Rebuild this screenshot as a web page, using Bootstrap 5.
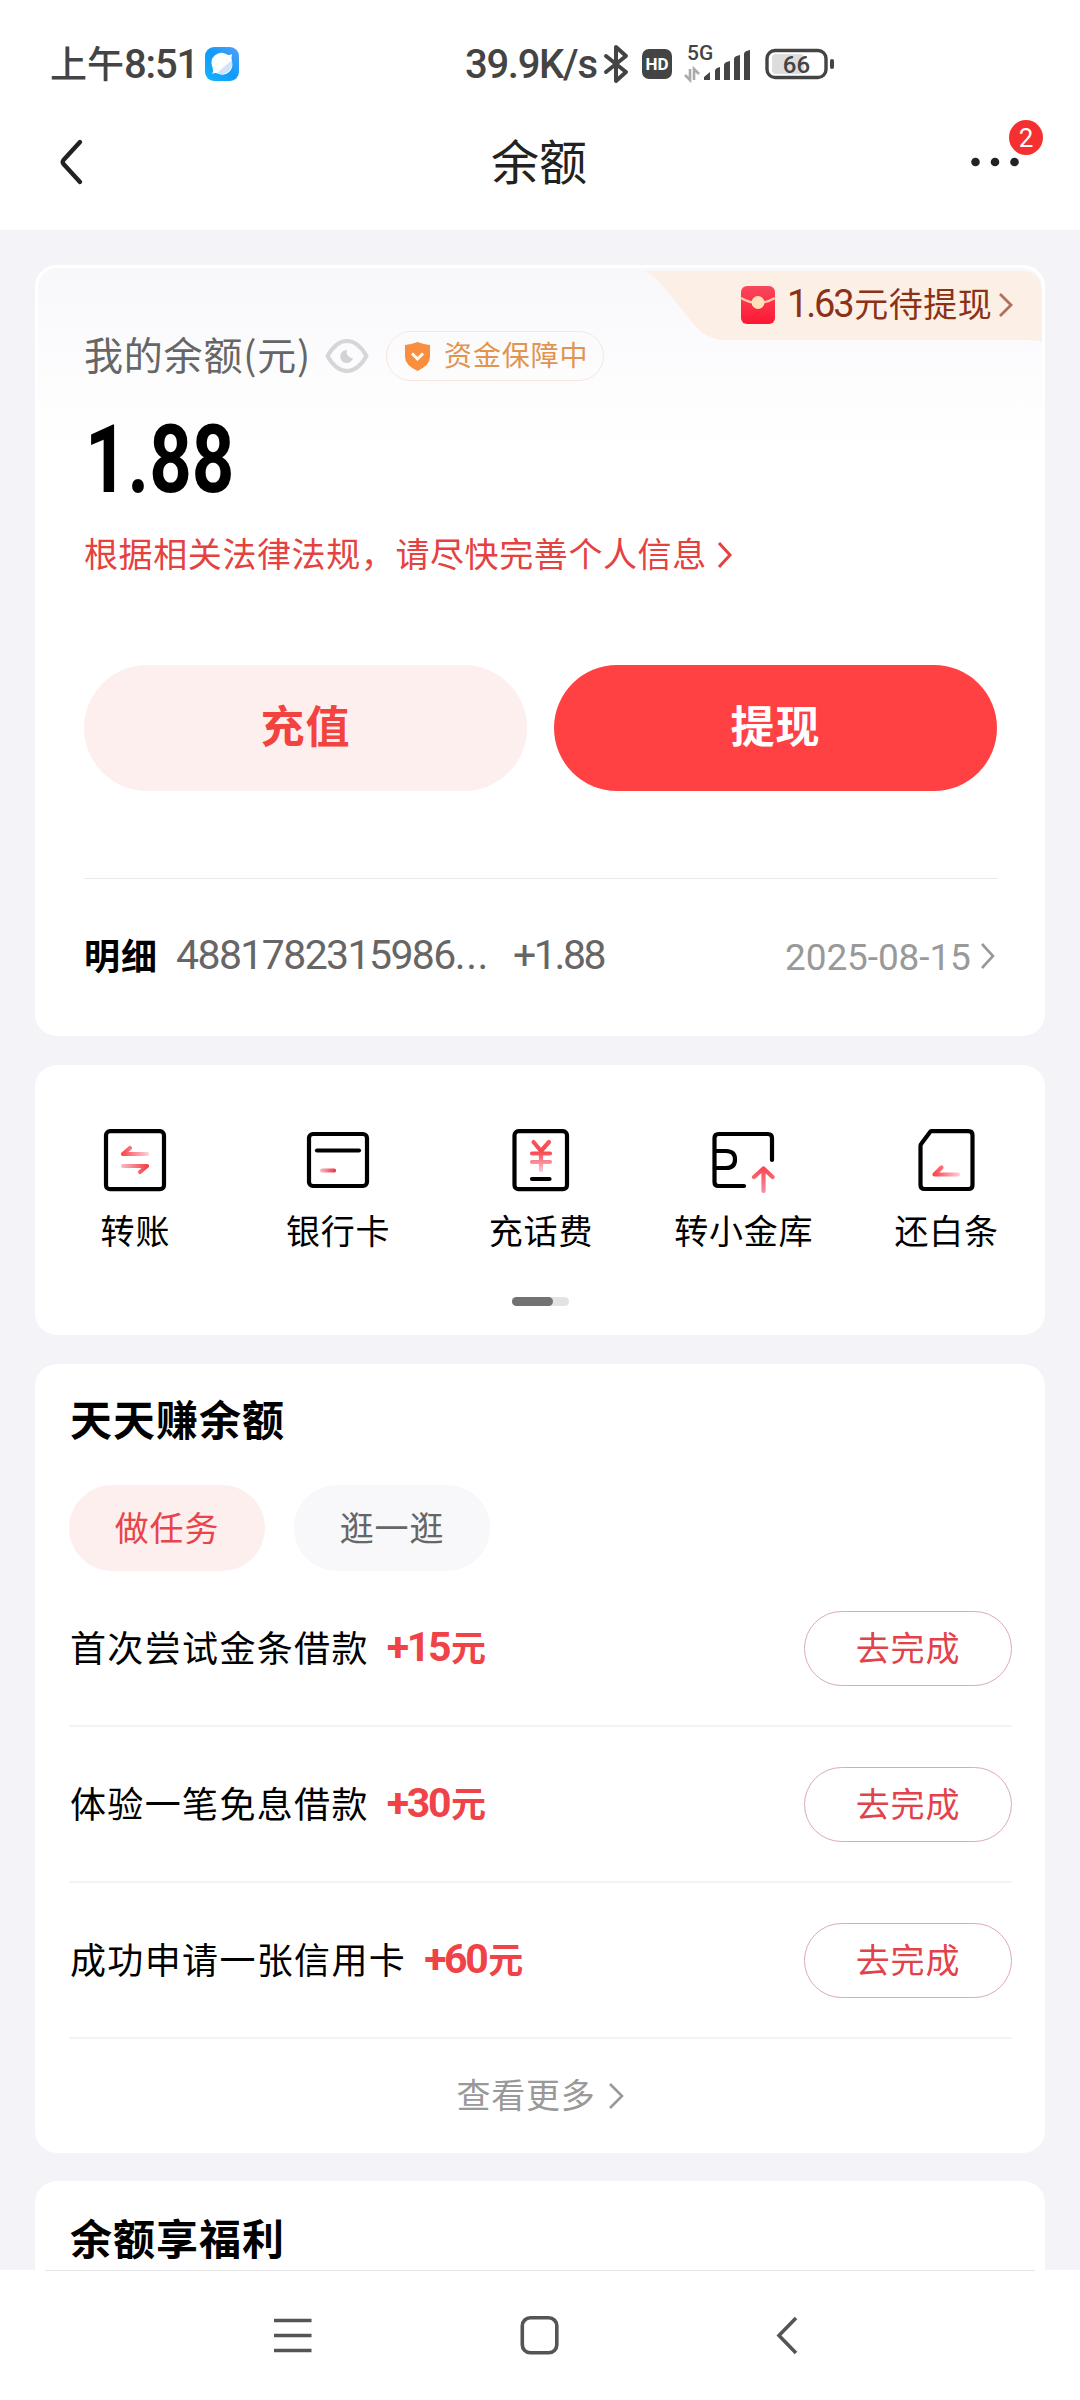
<!DOCTYPE html>
<html lang="zh-CN">
<head>
<meta charset="utf-8">
<meta name="viewport" content="width=device-width, initial-scale=1">
<title>余额</title>
<link href="https://cdn.jsdelivr.net/npm/bootstrap@5.3.0/dist/css/bootstrap.min.css" rel="stylesheet">
<style>
  body { width: 1080px; height: 2400px; overflow: hidden; background: #f3f3f8; color: #000; line-height: 1;
    font-family: "Noto Sans CJK SC", sans-serif; }
  svg { display: block; flex: none; overflow: visible; }
  span, h1, h2 { white-space: nowrap; line-height: 1; }
  .nudge { position: relative; top: -2px; }
  .num { font-family: Roboto, "Noto Sans CJK SC", sans-serif; }

  .statusbar { height: 84px; padding: 44px 0 0 50px; color: #444; }
  .statusbar > div { height: 40px; }
  .clock { font-size: 37px; font-weight: 500; width: 155px; padding-top: 1px; }
  .clock b { font-weight: 500; font-size: 40px; letter-spacing: -1.2px; }
  .speed { width: 138px; font-weight: 500; font-size: 40px; letter-spacing: -1.3px; margin-left: 226px; padding-top: 2px; }
  .titlebar { height: 146px; padding: 10px 60px 0; color: #222; }
  .titlebar h1 { font-size: 48px; top: -3px; left: -1px; }
  .more { width: 50px; }
  .count { width: 34px; height: 35px; left: 39px; top: -37px; background: #f63030; font-size: 26px; }

  .panel { width: 1010px; margin: 0 auto; background: #fff; border-radius: 22px; }
  .balance { height: 771px; margin-top: 35px; border: 3px solid #fff; padding: 63px 45px 0 46px;
    background: linear-gradient(#f8f8fb, #fdfdfe 120px, #fff 190px); }
  .pending { width: 399px; height: 71px; top: 3px; right: 0; background: #fcefe6; color: #8b3216; padding-left: 98px;
    clip-path: path("M0 0 C8 2 13 7 19 14 L48 50 Q62 68 80 69 L384 69 Q394 69 399 71 L399 18 Q396 0 380 0 Z"); }
  .pending > span { font-size: 34px; letter-spacing: .5px; width: 212px; margin-left: 12px; top: -3px; }
  .pending .num { font-size: 38px; letter-spacing: -2.2px; margin-right: 2px; }
  .label-row { height: 50px; color: #666; }
  .label-row > span { font-size: 39px; letter-spacing: .8px; width: 241px; top: -3px; }
  .guard { width: 218px; height: 50px; border: 1px solid #f6e6dd; border-radius: 25px; margin-left: 17px; padding-left: 17px; color: #e1934f; }
  .guard span { font-size: 28px; letter-spacing: .9px; }
  .amount { height: 100px; margin-top: 27px; font-size: 94px; font-weight: 700; }
  .amount span { transform: translate(1px, 2px) scaleX(.79); transform-origin: 0 50%; }
  .notice { height: 40px; margin-top: 27px; color: #e5423f; }
  .notice span { font-size: 34px; letter-spacing: .6px; width: 634px; }
  .actions { margin-top: 90px; gap: 27px; }
  .actions .btn { width: 443px; height: 126px; border: 0; font-size: 44px; font-weight: 700; letter-spacing: 1px; padding: 0; line-height: 1; }
  .actions .nudge { top: -4px; }
  .btn-soft { background: #feefef !important; color: #f2433f !important; }
  .btn-solid { background: #ff4143 !important; color: #fff !important; }
  .detail { margin-top: 87px; height: 155px; border-top: 1px solid #e9e9ec; margin-right: -1px; }
  .detail b { font-size: 36px; letter-spacing: 1px; width: 92px; }
  .detail .num { top: -1px; }
  .serial { font-size: 41px; color: #666; width: 337px; letter-spacing: -1.6px; }
  .serial i { font-style: normal; letter-spacing: .6px; }
  .gain { font-size: 41px; color: #666; letter-spacing: -2.4px; }
  .date { font-size: 37px; color: #999; width: 196px; padding-top: 2px; letter-spacing: -.1px; }

  .shortcuts { height: 270px; margin-top: 29px; }
  .shortcuts .items { margin: 0 -3px 0 -1px; padding-top: 60px; }
  .shortcuts .items > div { flex: 1 1 0; }
  .shortcuts span { font-size: 34px; letter-spacing: .8px; margin-top: 18px; }
  .pager { width: 57px; height: 9px; border-radius: 5px; background: #e3e3e4; margin: 50px auto 0; }
  .pager div { width: 41px; height: 9px; border-radius: 5px; background: #727272; }

  .tasks { height: 789px; margin-top: 29px; padding: 0 33px 0 34px; }
  h2.head { font-size: 42px; font-weight: 700; letter-spacing: 1px; margin: 0; }
  .tasks h2.head { height: 121px; padding-top: 33px; padding-left: 1px; }
  .tabs { gap: 29px; height: 86px; }
  .tabs div { width: 196px; height: 86px; border-radius: 43px; font-size: 34px; letter-spacing: .8px; }
  .tabs .nudge { top: -1px; }
  .tab-on { background: #feefef; color: #e8454a; }
  .tab-off { background: #f8f8fb; color: #666; }
  .task { height: 156px; border-bottom: 2px solid #f4f4f6; padding-left: 1px; }
  .task > span { font-size: 36px; letter-spacing: 1.35px; }
  .task > .bonus { font-weight: 700; color: #ef4348; margin-left: 18px; font-size: 35px; letter-spacing: 0; top: -1px; }
  .bonus .num { font-size: 41px; letter-spacing: -2.4px; margin-right: 2px; }
  .task .btn { width: 208px; height: 75px; border: 1px solid #dcaab0; border-radius: 38px; color: #e2434a; font-size: 34px;
    letter-spacing: .8px; line-height: 1; padding: 0; }
  .task .btn .nudge { top: -1px; }
  .showmore { height: 114px; color: #999; }
  .showmore span { font-size: 34px; letter-spacing: .7px; margin-right: 14px; }

  .welfare { height: 89px; margin-top: 28px; padding: 35px 35px 0; border-radius: 22px 22px 0 0; }
  .navbar-sys { height: 130px; background: #fff; color: #555; padding: 45px 0 0 273px; }
  .hairline { width: 990px; height: 1px; background: #e6e6e8; margin: 0 auto; }
</style>
</head>
<body>
<header class="bg-white">
  <div class="statusbar">
    <div class="d-flex align-items-center">
      <span class="clock">上午<b class="num">8:51</b></span>
      <svg width="34" height="34" viewBox="0 0 34 34">
        <defs><linearGradient id="gb" x1="0" y1="1" x2="1" y2="0"><stop offset="0" stop-color="#14b5fb"/><stop offset=".5" stop-color="#109bf9"/><stop offset="1" stop-color="#559ff8"/></linearGradient></defs>
        <rect width="34" height="34" rx="9" fill="url(#gb)"/>
        <path d="M7 27 Q9 24 7 19 A10 10 0 0 1 21 7 Q24 9 27 7 Q26 11 27 15 A10 10 0 0 1 14 27 Q10 25 7 27Z" fill="#fff"/>
        <path d="M27 13 L12 26 Q19 29 24 24 Q28 19 27 13Z" fill="#cfe3fa"/>
      </svg>
      <span class="speed num">39.9K/s</span>
      <svg width="26" height="40" viewBox="0 0 26 40" fill="none" stroke="#444" stroke-width="4" stroke-linejoin="round" stroke-linecap="round"><path d="M3 12 L23 28 L13 37 V3 L23 12 L3 28"/></svg>
      <svg width="30" height="30" viewBox="0 0 30 30" style="margin-left:13px"><rect width="30" height="30" rx="7" fill="#444"/><text x="15" y="21" text-anchor="middle" font-size="17" font-weight="700" fill="#fff" font-family="Roboto, sans-serif">HD</text></svg>
      <svg width="68" height="40" viewBox="0 0 68 40" style="margin-left:13px" fill="#444">
        <text x="2" y="16" font-size="21" font-weight="500" font-family="Roboto, sans-serif">5G</text>
        <path d="M0 31 L5 36 V25 M9 36 V25 L14 30" fill="none" stroke="#aaa" stroke-width="2.6"/>
        <path d="M19 36 V33 L25 28 V36ZM30 36 V27 Q30 24 35 23 V36ZM39 36 V21 Q39 18 45 17 V36ZM49 36 V15 Q49 12 55 11 V36ZM59 36 V10 Q59 7 65 6 V36Z"/>
      </svg>
      <svg width="70" height="32" viewBox="0 0 70 32" style="margin-left:12px">
        <rect x="7" y="6" width="32" height="20" rx="4" fill="#ddd"/>
        <rect x="2" y="2.500" width="59" height="27" rx="8" fill="none" stroke="#444" stroke-width="3.400"/>
        <rect x="65" y="11" width="4" height="10" rx="2" fill="#444"/>
        <text x="31.500" y="24.500" text-anchor="middle" font-size="24" font-weight="500" fill="#444" font-family="Roboto, sans-serif">66</text>
      </svg>
    </div>
  </div>
  <div class="titlebar d-flex align-items-center justify-content-between">
    <svg width="50" height="46" viewBox="0 0 50 46" fill="none" stroke="#222" stroke-width="4.400" stroke-linecap="round" stroke-linejoin="round"><path d="M20 3 L3.500 21 Q2 23 3.500 25 L20 43"/></svg>
    <h1 class="m-0 fw-normal nudge">余额</h1>
    <div class="more position-relative">
      <svg width="50" height="10" viewBox="0 0 50 10" fill="#222"><circle cx="5.500" cy="5" r="4.300"/><circle cx="25" cy="5" r="4.300"/><circle cx="44.500" cy="5" r="4.300"/></svg>
      <span class="count num position-absolute rounded-circle text-white d-flex align-items-center justify-content-center">2</span>
    </div>
  </div>
</header>

<main>
  <section class="panel balance position-relative">
    <div class="pending position-absolute d-flex align-items-center">
      <svg width="34" height="38" viewBox="0 0 34 38" class="nudge">
        <defs><linearGradient id="gp" x1="0" y1="0" x2="0" y2="1"><stop offset="0" stop-color="#f8485c"/><stop offset="1" stop-color="#fd1733"/></linearGradient></defs>
        <rect width="34" height="38" rx="6" fill="url(#gp)"/><path d="M0 12 Q17 22 34 12" fill="none" stroke="#ffc6ae" stroke-width="2.500"/><circle cx="17" cy="16.500" r="6.500" fill="#fee0bd"/>
      </svg>
      <span class="nudge"><span class="num">1.63</span>元待提现</span>
      <svg width="14" height="26" viewBox="0 0 14 26" class="nudge" fill="none" stroke="#b0705a" stroke-width="2.800"><path d="M1 2 L12 13 L1 24"/></svg>
    </div>
    <div class="label-row d-flex align-items-center">
      <span class="nudge">我的余额(元)</span>
      <svg width="44" height="36" viewBox="0 0 44 36"><path d="M2.500 18 Q11 3 22 3 Q33 3 41.500 18 Q33 33 22 33 Q11 33 2.500 18Z" fill="none" stroke="#d6d6d8" stroke-width="4" stroke-linejoin="round"/><path d="M22 12 A6.500 6.500 0 1 0 28 20 A6 6 0 0 1 22 12Z" fill="#d2d2d4"/></svg>
      <div class="guard d-flex align-items-center">
        <svg width="27" height="29" viewBox="0 0 27 29"><path d="M13.500 0 Q20 2.500 26 3 V15 Q26 23 13.500 29 Q1 23 1 15 V3 Q7 2.500 13.500 0Z" fill="#f98f3e"/><path d="M8 11.500 L13.500 17 L19 11.500" fill="none" stroke="#fff" stroke-width="3"/></svg>
        <span class="nudge" style="margin-left:13px">资金保障中</span>
      </div>
    </div>
    <div class="amount d-flex align-items-center"><span class="num">1.88</span></div>
    <div class="notice d-flex align-items-center">
      <span class="nudge">根据相关法律法规，请尽快完善个人信息</span>
      <svg width="14" height="28" viewBox="0 0 14 28" fill="none" stroke="#e5423f" stroke-width="3"><path d="M1 2 L12 14 L1 26"/></svg>
    </div>
    <div class="actions d-flex">
      <button class="btn btn-soft rounded-pill"><span class="nudge">充值</span></button>
      <button class="btn btn-solid rounded-pill"><span class="nudge">提现</span></button>
    </div>
    <div class="detail d-flex align-items-center">
      <b class="nudge">明细</b><span class="serial num nudge">4881782315986<i>...</i></span><span class="gain num nudge">+1.88</span>
      <span class="date num ms-auto">2025-08-15</span>
      <svg width="14" height="26" viewBox="0 0 14 26" style="margin-right:3px" fill="none" stroke="#999" stroke-width="2.600"><path d="M1 1 L12 13 L1 25"/></svg>
    </div>
  </section>

  <section class="panel shortcuts">
    <svg width="0" height="0" class="position-absolute">
      <defs>
        <linearGradient id="toL" gradientUnits="userSpaceOnUse" x1="18" y1="0" x2="46" y2="0"><stop offset="0" stop-color="#fb4049"/><stop offset="1" stop-color="#fbd5e0"/></linearGradient>
        <linearGradient id="toR" gradientUnits="userSpaceOnUse" x1="18" y1="0" x2="46" y2="0"><stop offset="0" stop-color="#f9bccb"/><stop offset="1" stop-color="#f4383f"/></linearGradient>
        <linearGradient id="toS" gradientUnits="userSpaceOnUse" x1="14" y1="0" x2="30" y2="0"><stop offset="0" stop-color="#f9bccb"/><stop offset="1" stop-color="#e8303a"/></linearGradient>
        <linearGradient id="dn" gradientUnits="userSpaceOnUse" x1="0" y1="14" x2="0" y2="46"><stop offset="0" stop-color="#f9575c"/><stop offset=".4" stop-color="#f9474e"/><stop offset="1" stop-color="#fbc5d4"/></linearGradient>
        <linearGradient id="up" gradientUnits="userSpaceOnUse" x1="0" y1="40" x2="0" y2="66"><stop offset="0" stop-color="#fa3f47"/><stop offset="1" stop-color="#f98aa0"/></linearGradient>
      </defs>
    </svg>
    <div class="items d-flex">
      <div class="d-flex flex-column align-items-center">
        <svg width="64" height="70" viewBox="0 0 64 70" fill="none" stroke="#000" stroke-width="4.200" stroke-linecap="round" stroke-linejoin="round"><rect x="3" y="6.200" width="58" height="58" rx="4"/><path d="M44 29 H20 L27 23" stroke="url(#toL)"/><path d="M20 41 H44 L37 47" stroke="url(#toR)"/></svg>
        <span>转账</span>
      </div>
      <div class="d-flex flex-column align-items-center">
        <svg width="64" height="70" viewBox="0 0 64 70" fill="none" stroke="#000" stroke-width="4.200" stroke-linecap="round" stroke-linejoin="round"><rect x="3" y="9" width="58" height="52" rx="4"/><path d="M11 25.500 H53"/><path d="M16 45.500 H28 v.1" stroke="url(#toS)"/></svg>
        <span>银行卡</span>
      </div>
      <div class="d-flex flex-column align-items-center">
        <svg width="64" height="70" viewBox="0 0 64 70" fill="none" stroke="#000" stroke-width="4.200" stroke-linecap="round" stroke-linejoin="round"><rect x="5.500" y="6.200" width="52.500" height="58" rx="4"/><path d="M23 54 H40.500"/><path d="M24.500 17 L32 26 L40 17 M32 26 V45 M23 28.500 H41 M23 37 H41" stroke="url(#dn)"/></svg>
        <span>充话费</span>
      </div>
      <div class="d-flex flex-column align-items-center">
        <svg width="64" height="70" viewBox="0 0 64 70" fill="none" stroke="#000" stroke-width="4.200" stroke-linecap="round" stroke-linejoin="round"><path d="M60 35 V13 Q60 9 56 9 H6.500 Q2.500 9 2.500 13 V57 Q2.500 61 6.500 61 H32 M2.500 26 H14 Q23 26 23 34.500 Q23 43 14 43 H2.500"/><path d="M42 52 L51.500 43.500 L60.500 52 M51.500 43.500 V66" stroke="url(#up)"/></svg>
        <span>转小金库</span>
      </div>
      <div class="d-flex flex-column align-items-center">
        <svg width="64" height="70" viewBox="0 0 64 70" fill="none" stroke="#000" stroke-width="4.200" stroke-linecap="round" stroke-linejoin="round"><path d="M16.500 6.200 H53.500 Q57.500 6.200 57.500 10.200 V60 Q57.500 64 53.500 64 H9.500 Q5.500 64 5.500 60 V21 Q5.500 19.500 6.500 18.500 L14.500 7.700 Q15.500 6.200 16.500 6.200Z"/><path d="M43 49.500 H19.500 L26.500 42.500" stroke="url(#toL)"/></svg>
        <span>还白条</span>
      </div>
    </div>
    <div class="pager"><div></div></div>
  </section>

  <section class="panel tasks">
    <h2 class="head">天天赚余额</h2>
    <div class="tabs d-flex">
      <div class="tab-on d-flex align-items-center justify-content-center"><span class="nudge">做任务</span></div>
      <div class="tab-off d-flex align-items-center justify-content-center"><span class="nudge">逛一逛</span></div>
    </div>
    <div class="task d-flex align-items-center"><span class="nudge">首次尝试金条借款</span><span class="bonus nudge"><span class="num">+15</span>元</span><button class="btn ms-auto"><span class="nudge">去完成</span></button></div>
    <div class="task d-flex align-items-center"><span class="nudge">体验一笔免息借款</span><span class="bonus nudge"><span class="num">+30</span>元</span><button class="btn ms-auto"><span class="nudge">去完成</span></button></div>
    <div class="task d-flex align-items-center"><span class="nudge">成功申请一张信用卡</span><span class="bonus nudge"><span class="num">+60</span>元</span><button class="btn ms-auto"><span class="nudge">去完成</span></button></div>
    <div class="showmore d-flex align-items-center justify-content-center">
      <span class="nudge">查看更多</span>
      <svg width="15" height="26" viewBox="0 0 15 26" fill="none" stroke="#999" stroke-width="2.600"><path d="M1 1 L13 13 L1 25"/></svg>
    </div>
  </section>

  <section class="panel welfare"><h2 class="head">余额享福利</h2></section>
</main>

<footer class="bg-white">
  <div class="hairline"></div>
  <div class="navbar-sys d-flex">
    <svg width="40" height="40" viewBox="0 0 40 40" stroke="#555" stroke-width="3.600"><path d="M1 4.500 H38.500 M1 19.500 H38.500 M1 34.500 H38.500"/></svg>
    <svg width="40" height="40" viewBox="0 0 40 40" style="margin-left:207px" fill="none" stroke="#555" stroke-width="3.600"><rect x="2.300" y="1.800" width="34.500" height="35" rx="8"/></svg>
    <svg width="24" height="40" viewBox="0 0 24 40" style="margin-left:215px" fill="none" stroke="#555" stroke-width="3.600"><path d="M21 2 L4 19.500 L21 37"/></svg>
  </div>
</footer>
<script src="https://cdn.jsdelivr.net/npm/bootstrap@5.3.0/dist/js/bootstrap.bundle.min.js"></script>
</body>
</html>
